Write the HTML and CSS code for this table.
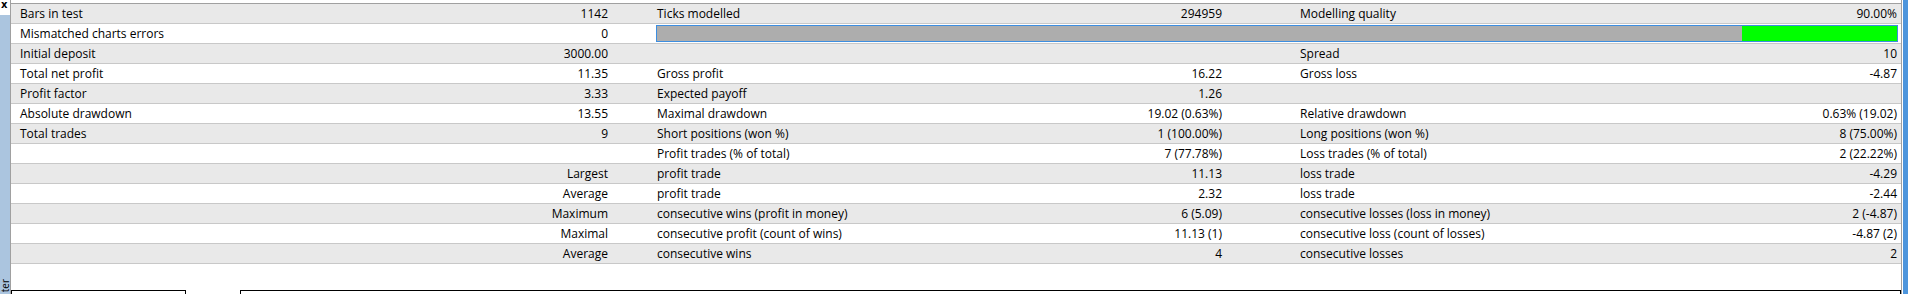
FILE: index.html
```html
<!DOCTYPE html>
<html>
<head>
<meta charset="utf-8">
<link rel="stylesheet" href="styles.css">
</head>
<body>
<div class="window">
  <div class="sidebar">
    <div class="close">x</div>
    <div class="tab"><span class="tab-label">ter</span></div>
  </div>
  <div class="main">
    <div class="report">
      <div class="row alt">
        <div class="c l1">Bars in test</div><div class="c v">1142</div>
        <div class="c l2">Ticks modelled</div><div class="c v">294959</div>
        <div class="c l3">Modelling quality</div><div class="c v v6">90.00%</div>
      </div>
      <div class="row">
        <div class="c l1">Mismatched charts errors</div><div class="c v">0</div>
        <div class="bar-cell"><div class="bar"><div class="bar-gray" style="width:87.5%"></div><div class="bar-green"></div></div></div>
      </div>
      <div class="row alt">
        <div class="c l1">Initial deposit</div><div class="c v">3000.00</div>
        <div class="c l2"></div><div class="c v"></div>
        <div class="c l3">Spread</div><div class="c v v6">10</div>
      </div>
      <div class="row">
        <div class="c l1">Total net profit</div><div class="c v">11.35</div>
        <div class="c l2">Gross profit</div><div class="c v">16.22</div>
        <div class="c l3">Gross loss</div><div class="c v v6">-4.87</div>
      </div>
      <div class="row alt">
        <div class="c l1">Profit factor</div><div class="c v">3.33</div>
        <div class="c l2">Expected payoff</div><div class="c v">1.26</div>
        <div class="c l3"></div><div class="c v v6"></div>
      </div>
      <div class="row">
        <div class="c l1">Absolute drawdown</div><div class="c v">13.55</div>
        <div class="c l2">Maximal drawdown</div><div class="c v">19.02 (0.63%)</div>
        <div class="c l3">Relative drawdown</div><div class="c v v6">0.63% (19.02)</div>
      </div>
      <div class="row alt">
        <div class="c l1">Total trades</div><div class="c v">9</div>
        <div class="c l2">Short positions (won %)</div><div class="c v">1 (100.00%)</div>
        <div class="c l3">Long positions (won %)</div><div class="c v v6">8 (75.00%)</div>
      </div>
      <div class="row">
        <div class="c l1"></div><div class="c v"></div>
        <div class="c l2">Profit trades (% of total)</div><div class="c v">7 (77.78%)</div>
        <div class="c l3">Loss trades (% of total)</div><div class="c v v6">2 (22.22%)</div>
      </div>
      <div class="row alt">
        <div class="c l1"></div><div class="c v">Largest</div>
        <div class="c l2">profit trade</div><div class="c v">11.13</div>
        <div class="c l3">loss trade</div><div class="c v v6">-4.29</div>
      </div>
      <div class="row">
        <div class="c l1"></div><div class="c v">Average</div>
        <div class="c l2">profit trade</div><div class="c v">2.32</div>
        <div class="c l3">loss trade</div><div class="c v v6">-2.44</div>
      </div>
      <div class="row alt">
        <div class="c l1"></div><div class="c v">Maximum</div>
        <div class="c l2">consecutive wins (profit in money)</div><div class="c v">6 (5.09)</div>
        <div class="c l3">consecutive losses (loss in money)</div><div class="c v v6">2 (-4.87)</div>
      </div>
      <div class="row">
        <div class="c l1"></div><div class="c v">Maximal</div>
        <div class="c l2">consecutive profit (count of wins)</div><div class="c v">11.13 (1)</div>
        <div class="c l3">consecutive loss (count of losses)</div><div class="c v v6">-4.87 (2)</div>
      </div>
      <div class="row alt">
        <div class="c l1"></div><div class="c v">Average</div>
        <div class="c l2">consecutive wins</div><div class="c v">4</div>
        <div class="c l3">consecutive losses</div><div class="c v v6">2</div>
      </div>
    </div>
    <div class="bottom">
      <div class="box box-small"></div>
      <div class="box box-wide"></div>
    </div>
  </div>
  <div class="gap"></div>
  <div class="edge"></div>
</div>
</body>
</html>
```

FILE: styles.css
```css
* { box-sizing: border-box; }
html, body {
  margin: 0;
  padding: 0;
  width: 1908px;
  height: 294px;
  overflow: hidden;
  background: #ffffff;
  font-family: "Open Sans", "Liberation Sans", Arial, sans-serif;
  font-size: 12px;
  color: #000;
}
.window {
  display: flex;
  height: 294px;
}
.sidebar {
  width: 10px;
  display: flex;
  flex-direction: column;
}
.close {
  height: 15px;
  font-family: "DejaVu Sans", sans-serif;
  font-weight: bold;
  font-size: 10px;
  line-height: 10px;
  padding-left: 1px;
  color: #000;
}
.tab {
  flex: 1;
  background: #abc5df;
  display: flex;
  flex-direction: column;
  justify-content: flex-end;
  align-items: center;
}
.tab-label {
  writing-mode: vertical-rl;
  transform: rotate(180deg);
  font-size: 10px;
  line-height: 10px;
  width: 10px;
  color: #000;
  margin-bottom: 2px;
}
.main {
  width: 1892px;
  border-left: 1px solid #a0a0a0;
  border-right: 1px solid #a0a0a0;
  display: flex;
  flex-direction: column;
}
.report {
  margin-top: 3px;
  border-top: 1px solid #a0a0a0;
}
.row {
  display: grid;
  grid-template-columns: 289px 312px 268px 346px 274px 401px;
  height: 20px;
  border-bottom: 1px solid #c8c8c8;
  background: #ffffff;
}
.row.alt { background: #e9e9e9; }
.c {
  line-height: 19px;
  white-space: nowrap;
  overflow: hidden;
}
.l1 { padding-left: 9px; }
.l2 { padding-left: 45px; }
.l3 { padding-left: 74px; }
.v { text-align: right; padding-right: 4px; }
.v6 { padding-right: 4px; }
.bar-cell {
  grid-column: 3 / 7;
  padding: 1px 3px 1px 44px;
}
.bar {
  height: 17px;
  border: 1px solid #3d8ee0;
  display: flex;
}
.bar-gray { background: #adadad; }
.bar-green { flex: 1; background: #00ff00; }
.bottom {
  margin-top: 26px;
  display: flex;
  gap: 54px;
  flex: 1;
  min-height: 0;
}
.box {
  border: 1px solid #000;
  border-bottom: none;
}
.box-small { width: 175px; }
.box-wide { flex: 1; }
.gap { width: 1px; }
.edge { width: 5px; background: #4d95dc; }
```
